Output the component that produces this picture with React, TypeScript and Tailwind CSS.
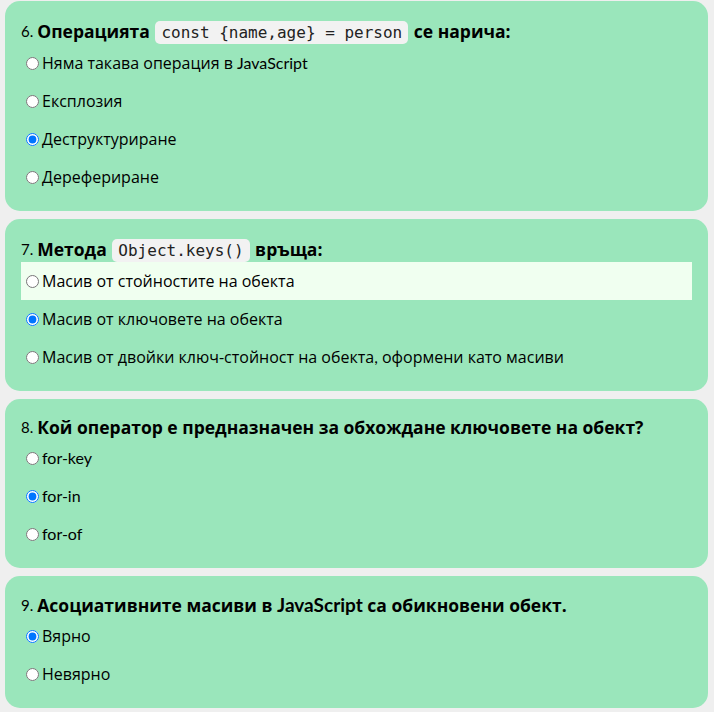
import React from "react"

type Option = { label: React.ReactNode; checked?: boolean; hover?: boolean }
type Question = { num: string; title: React.ReactNode; titleH: string; rowH: string; options: Option[] }

const latin = "font-['Lato','Open_Sans',sans-serif]"

function Code({ children }: { children: React.ReactNode }) {
  return (
    <code className="mx-px rounded-[5px] bg-[#f2f2f2] px-[6px] py-[2px] font-['DejaVu_Sans_Mono','Liberation_Mono',monospace] text-[16px] font-normal leading-[19px] text-[#222]">
      {children}
    </code>
  )
}

const questions: Question[] = [
  {
    num: "6.",
    titleH: "h-[26px]",
    rowH: "h-[38px]",
    title: (
      <>
        Операцията <Code>const {"{name,age}"} = person</Code> се нарича:
      </>
    ),
    options: [
      {
        label: (
          <>
            Няма такава операция в <span className={latin}>JavaScript</span>
          </>
        ),
      },
      { label: "Експлозия" },
      { label: "Деструктуриране", checked: true },
      { label: "Дерефериране" },
    ],
  },
  {
    num: "7.",
    titleH: "h-[26px]",
    rowH: "h-[38px]",
    title: (
      <>
        Метода <Code>Object.keys()</Code> връща:
      </>
    ),
    options: [
      { label: "Масив от стойностите на обекта", hover: true },
      { label: "Масив от ключовете на обекта", checked: true },
      {
        label: (
          <>
            Масив от двойки ключ-стойност на обекта<span className={latin}>,</span> оформени като масиви
          </>
        ),
      },
    ],
  },
  {
    num: "8.",
    titleH: "h-[23px]",
    rowH: "h-[38px]",
    title: "Кой оператор е предназначен за обхождане ключовете на обект?",
    options: [
      { label: <span className={latin}>for-key</span> },
      { label: <span className={latin}>for-in</span>, checked: true },
      { label: <span className={latin}>for-of</span> },
    ],
  },
  {
    num: "9.",
    titleH: "h-[24px]",
    rowH: "h-[38px]",
    title: (
      <>
        Асоциативните масиви в <span className={`${latin} text-[19px]`}>JavaScript</span> са обикновени обект.
      </>
    ),
    options: [{ label: "Вярно", checked: true }, { label: "Невярно" }],
  },
]

export default function App() {
  return (
    <div className="min-h-screen bg-[#efefef] pl-[5px] pr-[6px] pt-px pb-2 font-['Open_Sans','Noto_Sans',sans-serif] text-black">
      <div className="flex flex-col gap-2">
        {questions.map((q, qi) => (
          <div key={q.num} className="rounded-[15px] bg-[#9ae6bb] px-4 pt-[17px] pb-[15px]">
            <div className={`flex ${q.titleH} items-center whitespace-nowrap text-[17.5px] font-bold`}>
              <span className={`${latin} mr-[4px] text-[15px] font-normal`}>{q.num}</span>
              <span>{q.title}</span>
            </div>
            {q.options.map((o, oi) => (
              <label
                key={oi}
                className={`flex ${q.rowH} items-center gap-[3px] pl-[5px] text-[16px] ${o.hover ? "bg-[#f0fff0]" : ""}`}
              >
                <input
                  type="radio"
                  name={`q${qi}`}
                  defaultChecked={o.checked}
                  className="h-[13px] w-[13px] accent-[#0075ff]"
                />
                <span>{o.label}</span>
              </label>
            ))}
          </div>
        ))}
      </div>
    </div>
  )
}
